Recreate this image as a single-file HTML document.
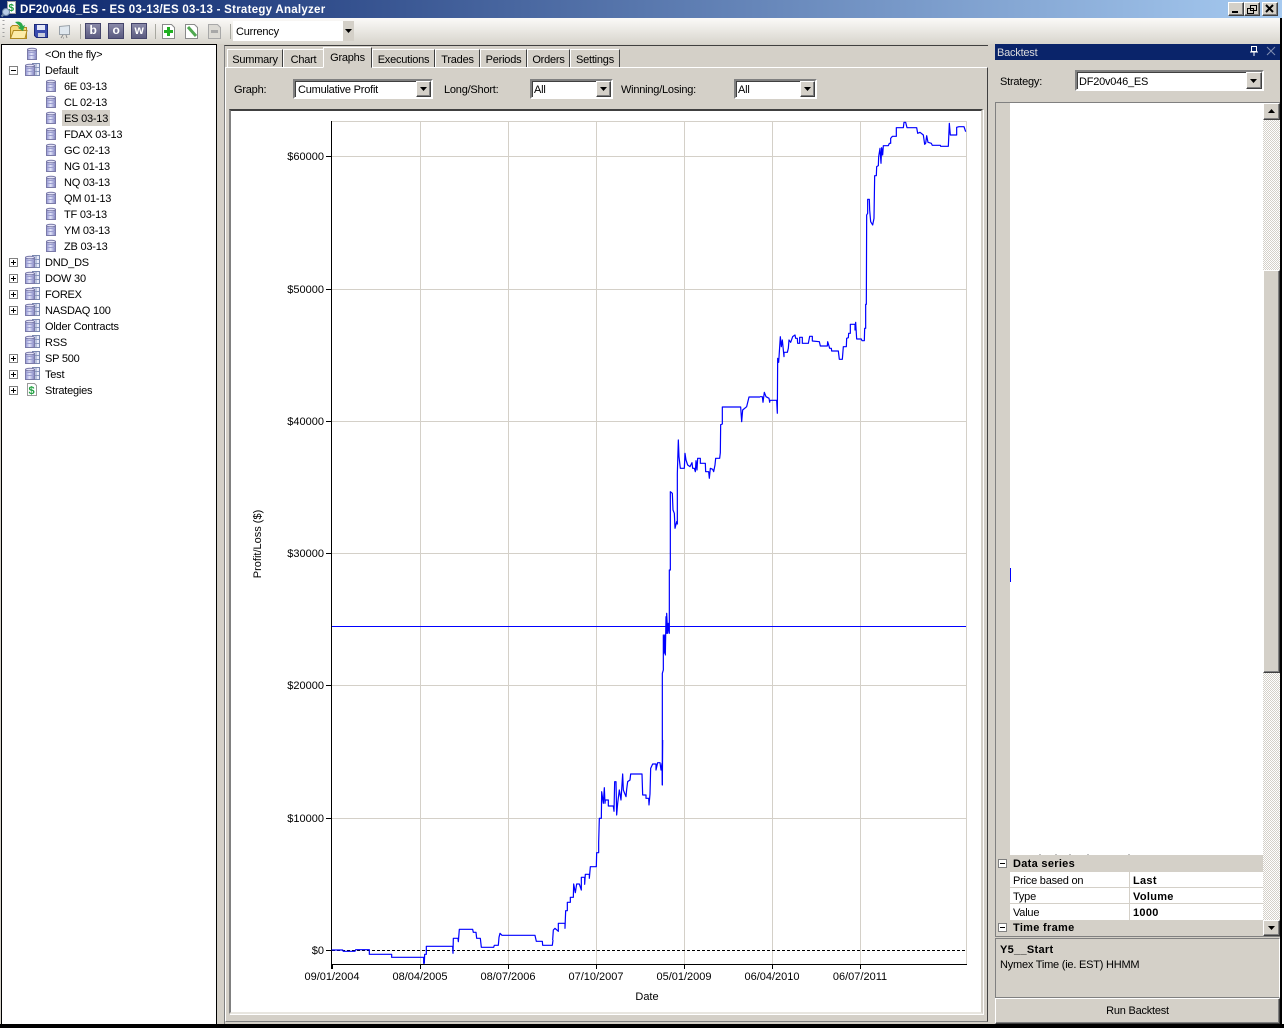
<!DOCTYPE html>
<html><head><meta charset="utf-8"><title>Strategy Analyzer</title>
<style>
html,body{margin:0;padding:0;background:#000;}
#r{position:relative;width:1284px;height:1028px;overflow:hidden;background:#d4d0c8;font:11px "Liberation Sans",sans-serif;color:#000;letter-spacing:-.22px;}
#r div{position:absolute;box-sizing:border-box;}
.t{white-space:nowrap;line-height:14px;height:14px;}
.n{letter-spacing:0;}
.b{font-weight:bold;letter-spacing:.3px;}
.tab{top:49px;height:18px;border-top:1px solid #fff;border-left:1px solid #fff;border-right:1px solid #404040;text-align:center;line-height:20px;background:#d4d0c8;white-space:nowrap;}
.combo{background:#fff;border:2px solid;border-color:#808080 #fff #fff #808080;box-shadow:inset 1px 1px 0 #404040;}
.btn{background:#d4d0c8;border:1px solid;border-color:#fff #404040 #404040 #fff;box-shadow:inset -1px -1px 0 #808080;}
.tb{top:23px;width:16px;height:16px;background:linear-gradient(#8a8aa8,#5a5a80);border:1px solid #44446a;color:#fff;font-weight:bold;font-size:12px;line-height:13px;text-align:center;}
svg{position:absolute;left:0;top:0;}
</style></head><body><div id="r">

<!-- title bar -->
<div style="left:0;top:0;width:1282px;height:18px;background:linear-gradient(90deg,#0a246a,#a6caf0);"></div>
<div class="t b" style="left:20px;top:3px;color:#fff;font-size:11.5px;letter-spacing:.27px;">DF20v046_ES - ES 03-13/ES 03-13 - Strategy Analyzer</div>
<div class="btn" style="left:1228px;top:2px;width:16px;height:14px;"></div>
<div class="btn" style="left:1244px;top:2px;width:16px;height:14px;"></div>
<div class="btn" style="left:1262px;top:2px;width:16px;height:14px;"></div>

<!-- toolbar -->
<div style="left:0;top:18px;width:1280px;height:26px;background:linear-gradient(#fbfaf8,#d8d5cd);"></div>
<div class="tb" style="left:85px;">b</div>
<div class="tb" style="left:108px;">o</div>
<div class="tb" style="left:131px;">w</div>
<div style="left:233px;top:21px;width:121px;height:20px;background:#fff;"></div>
<div class="t" style="left:236px;top:25px;">Currency</div>
<div style="left:343px;top:21px;width:11px;height:20px;background:#d4d0c8;"></div>

<!-- tree panel -->
<div style="left:1px;top:44px;width:216px;height:980px;background:#fff;border:1px solid #000;border-bottom:0;"></div>
<div style="left:62px;top:110px;width:48px;height:16px;background:#d4d0c8;"></div>
<div class="t" style="left:45px;top:48px;">&lt;On the fly&gt;</div>
<div class="t" style="left:45px;top:64px;">Default</div>
<div class="t" style="left:64px;top:80px;">6E 03-13</div>
<div class="t" style="left:64px;top:96px;">CL 02-13</div>
<div class="t" style="left:64px;top:112px;">ES 03-13</div>
<div class="t" style="left:64px;top:128px;">FDAX 03-13</div>
<div class="t" style="left:64px;top:144px;">GC 02-13</div>
<div class="t" style="left:64px;top:160px;">NG 01-13</div>
<div class="t" style="left:64px;top:176px;">NQ 03-13</div>
<div class="t" style="left:64px;top:192px;">QM 01-13</div>
<div class="t" style="left:64px;top:208px;">TF 03-13</div>
<div class="t" style="left:64px;top:224px;">YM 03-13</div>
<div class="t" style="left:64px;top:240px;">ZB 03-13</div>
<div class="t" style="left:45px;top:256px;">DND_DS</div>
<div class="t" style="left:45px;top:272px;">DOW 30</div>
<div class="t" style="left:45px;top:288px;">FOREX</div>
<div class="t" style="left:45px;top:304px;">NASDAQ 100</div>
<div class="t" style="left:45px;top:320px;">Older Contracts</div>
<div class="t" style="left:45px;top:336px;">RSS</div>
<div class="t" style="left:45px;top:352px;">SP 500</div>
<div class="t" style="left:45px;top:368px;">Test</div>
<div class="t" style="left:45px;top:384px;">Strategies</div>

<!-- main tab frame -->
<div style="left:224px;top:45px;width:764px;height:979px;background:#d4d0c8;border-top:1px solid #404040;border-left:1px solid #808080;"></div>
<div style="left:225px;top:67px;width:763px;height:955px;border:1px solid #fff;border-right:1px solid #404040;border-bottom:1px solid #808080;"></div>
<div class="tab" style="left:227px;width:56px;">Summary</div>
<div class="tab" style="left:283px;width:41px;">Chart</div>
<div class="tab" style="left:372px;width:63px;">Executions</div>
<div class="tab" style="left:435px;width:45px;">Trades</div>
<div class="tab" style="left:480px;width:47px;">Periods</div>
<div class="tab" style="left:527px;width:43px;">Orders</div>
<div class="tab" style="left:570px;width:50px;">Settings</div>
<div class="tab" style="left:323px;top:47px;width:49px;height:21px;line-height:20px;border-bottom:1px solid #d4d0c8;z-index:2;">Graphs</div>

<div class="t" style="left:234px;top:83px;">Graph:</div>
<div class="combo" style="left:293px;top:79px;width:140px;height:20px;"></div>
<div class="t" style="left:298px;top:83px;">Cumulative Profit</div>
<div class="btn" style="left:416px;top:81px;width:15px;height:16px;"></div>
<div class="t" style="left:444px;top:83px;">Long/Short:</div>
<div class="combo" style="left:530px;top:79px;width:83px;height:20px;"></div>
<div class="t" style="left:534px;top:83px;">All</div>
<div class="btn" style="left:596px;top:81px;width:15px;height:16px;"></div>
<div class="t" style="left:621px;top:83px;">Winning/Losing:</div>
<div class="combo" style="left:734px;top:79px;width:83px;height:20px;"></div>
<div class="t" style="left:738px;top:83px;">All</div>
<div class="btn" style="left:800px;top:81px;width:15px;height:16px;"></div>

<!-- chart frame -->
<div style="left:229px;top:109px;width:754px;height:905px;background:#fff;border:2px solid;border-color:#404040 #d4d0c8 #e8e6e0 #808080;box-shadow:1px 1px 0 #fff;"></div>

<div class="t n" style="left:264px;top:150px;width:60px;text-align:right;">$60000</div>
<div class="t n" style="left:264px;top:283px;width:60px;text-align:right;">$50000</div>
<div class="t n" style="left:264px;top:415px;width:60px;text-align:right;">$40000</div>
<div class="t n" style="left:264px;top:547px;width:60px;text-align:right;">$30000</div>
<div class="t n" style="left:264px;top:679px;width:60px;text-align:right;">$20000</div>
<div class="t n" style="left:264px;top:812px;width:60px;text-align:right;">$10000</div>
<div class="t n" style="left:264px;top:944px;width:60px;text-align:right;">$0</div>
<div class="t n" style="left:292px;top:970px;width:80px;text-align:center;">09/01/2004</div>
<div class="t n" style="left:380px;top:970px;width:80px;text-align:center;">08/04/2005</div>
<div class="t n" style="left:468px;top:970px;width:80px;text-align:center;">08/07/2006</div>
<div class="t n" style="left:556px;top:970px;width:80px;text-align:center;">07/10/2007</div>
<div class="t n" style="left:644px;top:970px;width:80px;text-align:center;">05/01/2009</div>
<div class="t n" style="left:732px;top:970px;width:80px;text-align:center;">06/04/2010</div>
<div class="t n" style="left:820px;top:970px;width:80px;text-align:center;">06/07/2011</div>
<div class="t n" style="left:607px;top:990px;width:80px;text-align:center;">Date</div>
<div class="t n" style="left:208px;top:537px;width:100px;text-align:center;transform:rotate(-90deg);">Profit/Loss ($)</div>

<!-- backtest panel -->
<div style="left:995px;top:44px;width:286px;height:16px;background:#0a246a;"></div>
<div class="t" style="left:997px;top:46px;color:#dcdcdc;">Backtest</div>
<div class="t" style="left:1000px;top:75px;">Strategy:</div>
<div class="combo" style="left:1075px;top:70px;width:189px;height:21px;"></div>
<div class="t" style="left:1079px;top:75px;">DF20v046_ES</div>
<div class="btn" style="left:1246px;top:72px;width:16px;height:17px;"></div>

<div style="left:995px;top:102px;width:285px;height:835px;background:#d4d0c8;border-top:1px solid #808080;border-left:1px solid #808080;"></div>
<div style="left:1010px;top:103px;width:253px;height:752px;background:#fff;"></div>
<div style="left:1010px;top:568px;width:1px;height:14px;background:#00f;"></div>
<div style="left:1263px;top:103px;width:17px;height:833px;background:repeating-conic-gradient(#fff 0 25%,#d4d0c8 0 50%) 0 0/2px 2px;"></div>
<div class="btn" style="left:1263px;top:103px;width:17px;height:17px;"></div>
<div class="btn" style="left:1263px;top:270px;width:17px;height:403px;"></div>
<div class="btn" style="left:1263px;top:920px;width:17px;height:16px;"></div>
<div style="left:1010px;top:872px;width:253px;height:48px;background:#fff;"></div>
<div style="left:1010px;top:887px;width:253px;height:1px;background:#d4d0c8;"></div>
<div style="left:1010px;top:903px;width:253px;height:1px;background:#d4d0c8;"></div>
<div style="left:1129px;top:872px;width:1px;height:48px;background:#d4d0c8;"></div>
<div class="t b" style="left:1013px;top:857px;">Data series</div>
<div class="t" style="left:1013px;top:874px;">Price based on</div>
<div class="t b" style="left:1133px;top:874px;">Last</div>
<div class="t" style="left:1013px;top:890px;">Type</div>
<div class="t b" style="left:1133px;top:890px;">Volume</div>
<div class="t" style="left:1013px;top:906px;">Value</div>
<div class="t b" style="left:1133px;top:906px;">1000</div>
<div class="t b" style="left:1013px;top:921px;">Time frame</div>
<div style="left:995px;top:936px;width:285px;height:1px;background:#808080;"></div>
<div style="left:995px;top:938px;width:285px;height:60px;border:1px solid #808080;border-right-color:#fff;"></div>
<div class="t b" style="left:1000px;top:943px;">Y5__Start</div>
<div class="t" style="left:1000px;top:958px;">Nymex Time (ie. EST) HHMM</div>
<div class="btn" style="left:995px;top:998px;width:285px;height:26px;text-align:center;line-height:25px;">Run Backtest</div>

<!-- black edges -->
<div style="left:0;top:1024px;width:1284px;height:4px;background:#000;"></div>
<div style="left:1280px;top:18px;width:2px;height:1010px;background:#000;"></div>
<div style="left:1282px;top:0;width:2px;height:1024px;background:#fff;"></div>

<svg width="1284" height="1028" viewBox="0 0 1284 1028" fill="none">
<defs>
<linearGradient id="dbg" x1="0" x2="1"><stop offset="0" stop-color="#8f92d2"/><stop offset=".45" stop-color="#e2e4f8"/><stop offset="1" stop-color="#7d80c0"/></linearGradient>
<g id="db"><rect x=".5" y="1.5" width="9" height="10" fill="url(#dbg)" stroke="#7a7aa8"/><ellipse cx="5" cy="1.5" rx="4.5" ry="1.3" fill="#e4e4f8" stroke="#7a7aa8"/><path d="M1 4.500h8M1 7.500h8" stroke="#9c9ed0"/></g>
<g id="dbt"><rect x="7.5" y=".5" width="7" height="12" fill="#e8ebfa" stroke="#7a88b0"/><path d="M8 4.500h6M8 8.500h6M11 1v11" stroke="#8a98c0"/><use href="#db" y="1"/></g>
<g id="plus"><rect x=".5" y=".5" width="8" height="8" fill="#fff" stroke="#808080"/><path d="M2 4.500h5M4.500 2v5" stroke="#000"/></g>
<g id="minus"><rect x=".5" y=".5" width="8" height="8" fill="#fff" stroke="#808080"/><path d="M2 4.500h5" stroke="#000"/></g>
<path id="dn" d="M0 0h7l-3.500 4z" fill="#000"/>
</defs>

<!-- app icon -->
<path d="M7.500 1.500h8v12h-8z" fill="#fff" stroke="#a0a0a0"/>
<text x="8.500" y="11" font-family="Liberation Sans" font-weight="bold" font-size="10" fill="#20a040" letter-spacing="0">$</text>
<circle cx="6" cy="12" r="3.500" fill="#b8cce8" stroke="#7088a8"/>
<path d="M3.500 14.500l-2 2" stroke="#7088a8" stroke-width="2"/>

<!-- toolbar icons -->
<path d="M3.500 20v1M3.500 24v1M3.500 28v1M3.500 32v1M3.500 36v1" stroke="#a0a0a0" stroke-width="2"/>
<path d="M80.500 24v15M155.500 24v15M230.500 24v15" stroke="#a8a8a0"/>
<path d="M10.500 38.500v-11l2-2h5l2 2h7v11z" fill="#f6d878" stroke="#b08a20"/>
<path d="M10.500 38.500l3-8h13.500l-2 8z" fill="#fdeca8" stroke="#b08a20"/>
<path d="M15 22c4-1 7 0 8 4l2-1-2 6-5-3 2-1c-1-2-3-3-5-5z" fill="#2aa84a"/>
<path d="M34.500 24.500h13v13h-11l-2-2z" fill="#3a4cae" stroke="#1c2a78"/>
<rect x="37" y="25" width="8" height="5" fill="#e4e8f8"/><rect x="38" y="33" width="7" height="4" fill="#c8ccdc"/>
<path d="M59.500 26.500l10-1v9h-10z" fill="#dfe7ee" stroke="#9aa2aa"/><path d="M63 35l-2 3M66 35l1 3M63 38h1" stroke="#8a8a8a"/>
<path d="M162.500 24.500h9l3 3v11h-12z" fill="#fff" stroke="#8a8a8a"/><path d="M168.500 27v9M164 31.500h9" stroke="#20b020" stroke-width="3"/>
<path d="M185.500 24.500h9l3 3v11h-12z" fill="#fff" stroke="#8a8a8a"/><path d="M188 27l8 9" stroke="#50a850" stroke-width="3"/>
<path d="M208.500 24.500h9l3 3v11h-12z" fill="#dcdad4" stroke="#a8a8a8"/><path d="M211 31.500h7" stroke="#a8a8a8" stroke-width="3"/>
<use href="#dn" x="345" y="29"/>

<!-- window buttons -->
<path d="M1232 12h6" stroke="#000" stroke-width="2"/>
<path d="M1250.500 5.500h6v5h-6zM1247.500 8.500h6v5h-6z" fill="#d4d0c8" stroke="#000"/>
<path d="M1266 5l7 7M1273 5l-7 7" stroke="#000" stroke-width="2"/>

<!-- tree icons -->
<use href="#db" x="27" y="48"/>
<use href="#dbt" x="25" y="63"/>
<use href="#minus" x="9" y="66"/>
<use href="#db" x="46" y="80"/><use href="#db" x="46" y="96"/><use href="#db" x="46" y="112"/><use href="#db" x="46" y="128"/><use href="#db" x="46" y="144"/><use href="#db" x="46" y="160"/><use href="#db" x="46" y="176"/><use href="#db" x="46" y="192"/><use href="#db" x="46" y="208"/><use href="#db" x="46" y="224"/><use href="#db" x="46" y="240"/>
<use href="#dbt" x="25" y="255"/><use href="#dbt" x="25" y="271"/><use href="#dbt" x="25" y="287"/><use href="#dbt" x="25" y="303"/><use href="#dbt" x="25" y="319"/><use href="#dbt" x="25" y="335"/><use href="#dbt" x="25" y="351"/><use href="#dbt" x="25" y="367"/>
<use href="#plus" x="9" y="258"/><use href="#plus" x="9" y="274"/><use href="#plus" x="9" y="290"/><use href="#plus" x="9" y="306"/><use href="#plus" x="9" y="354"/><use href="#plus" x="9" y="370"/><use href="#plus" x="9" y="386"/>
<path d="M27.500 383.500h7l2 2v10h-9z" fill="#fff" stroke="#9a9a9a"/>
<text x="28.500" y="394" font-family="Liberation Sans" font-weight="bold" font-size="11" fill="#20a040" letter-spacing="0">$</text>

<!-- combo and scroll arrows -->
<use href="#dn" x="420" y="87"/><use href="#dn" x="600" y="87"/><use href="#dn" x="804" y="87"/><use href="#dn" x="1250" y="79"/>
<path d="M1268 113h7l-3.500-4z" fill="#000"/>
<use href="#dn" x="1268" y="926"/>

<!-- backtest title icons -->
<path d="M1251.500 46.500h5v5h-5zM1250 52h8M1254 52v4" stroke="#fff"/>
<path d="M1267 47l8 8M1275 47l-8 8" stroke="#7f8db0"/>
<use href="#minus" x="998" y="859"/><use href="#minus" x="998" y="923"/>
<path d="M1129 855v-1M1040 855v-1M1056 855v-1M1070 855v-1M1088 855v-1" stroke="#808080"/>

<!-- chart -->
<g shape-rendering="crispEdges">
<path d="M332 121.500h635M332 156.500h635M332 289.500h635M332 421.500h635M332 553.500h635M332 685.500h635M332 818.500h635M420.500 121v843M508.500 121v843M596.500 121v843M684.500 121v843M772.500 121v843M860.500 121v843M966.500 121v843" stroke="#d4d0c8"/>
<path d="M332 626.500h634" stroke="#0000ff"/>
<path d="M332 950.500h634" stroke="#000" stroke-dasharray="3 2"/>
<path d="M331.500 121v848M331 964.500h636" stroke="#000"/>
<path d="M326 156.500h6M326 289.500h6M326 421.500h6M326 553.500h6M326 685.500h6M326 818.500h6M326 950.500h6M332.500 964v5M420.500 964v5M508.500 964v5M596.500 964v5M684.500 964v5M772.500 964v5M860.500 964v5" stroke="#000"/>
</g>
<g stroke="#0000ff" stroke-width="3.6" stroke-linejoin="round" fill="none">
<polyline transform="translate(330 900) scale(.33333)" points="5,150 38,150 40,154 75,154 77,149 118,149 118,163 185,163 185,172 281,172 281,190 283,190 284,163 289,163 289,139 368,139 369,160 370,115 384,115 385,125 388,88 428,88 430,97 438,97 440,115 451,115 454,142 491,142 493,136 505,136 507,112 510,100 516,106 615,106 619,124 637,124 638,136 667,136 669,120"/>
<polyline transform="translate(540 740) scale(.33333)" points="38,600 40,570 45,565 55,574 55,550 75,550 75,565 77,512 82,512 82,487 91,487 91,472 100,472 101,432 106,458 110,432 118,432 124,450 124,412 134,412 134,433 136,403 148,403 148,415 151,380 169,380 170,338 176,338 176,307 178,235 184,235 185,155 190,190 193,143 195,190 196,180 205,180 205,198 220,198 222,214 224,125 228,125 230,225 233,190 238,150 243,180 248,102 250,150 258,170 260,148 263,125 270,120 272,102 306,102 308,165 318,165 318,175 326,175 327,195 330,162 332,85 338,72 348,72 348,90 353,68 360,68 363,90 366,70 367,135 368,0"/>
<polyline transform="translate(550 420) scale(.33333)" points="337,1095 337,760 340,750 340,645 342,700 344,645 346,705 348,590 350,640 350,580 353,640 355,610 358,640 358,450 361,450 361,215 367,220 369,270 373,280 375,325 380,305 382,312 382,160 385,60 387,110 391,145 403,145 405,100 408,120 413,135 420,140 426,128 428,145 433,145 436,155 438,122 441,150 443,115 451,115 451,130 466,130 467,155 476,155 478,175 481,145 488,148 491,155 495,135 497,115 509,115 511,98 512,14 517,12 517,-39 572,-39 575,5 578,-30 590,-40 597,-69 630,-69"/>
<polyline transform="translate(760 115) scale(.33333)" points="0,845 7,845 9,862 13,832 18,845 27,850 29,862 30,856 50,856 52,895 53,730 56,742 61,665 64,695 67,675 72,725 72,712 82,712 85,700 87,675 92,682 98,665 105,660 107,670 112,670 113,685 119,685 119,667 127,667 127,685 145,685 149,664 157,664 157,678 178,680 181,693 202,693 203,680 209,700 214,700 215,708 235,708 238,733 247,733 250,695 259,695 260,670 265,668 266,655 271,655 271,628 285,628 285,645 287,622 290,672 304,672 306,677 313,677 314,640 317,640 317,568 319,568 320,300 323,295 323,253 328,253 329,285 332,320 338,330 342,310 344,182 349,182 350,155 355,152 356,125 360,100 363,145 365,98 368,120 370,92 385,92 388,85 392,85 392,70 397,64 409,64 409,38 430,38 432,22 437,22 441,38 470,38 473,55 480,52 490,60 494,88 497,85 500,62 504,82 514,85 517,91 541,91 542,94 565,94 568,25 571,60 590,60 590,37 597,35 612,35 617,50"/>
</g>
</svg>
</div></body></html>
